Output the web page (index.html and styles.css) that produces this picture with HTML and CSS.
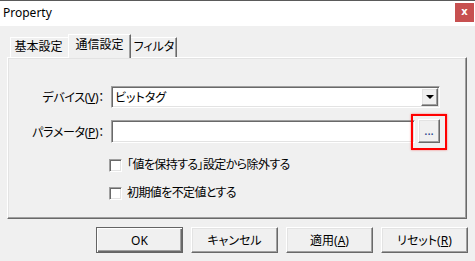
FILE: index.html
```html
<!DOCTYPE html>
<html lang="ja">
<head>
<meta charset="utf-8">
<title>Property</title>
<link rel="stylesheet" href="styles.css">
</head>
<body>
<div class="window">
  <div class="titlebar">
    <span class="title">Property</span>
    <span class="close">x</span>
  </div>
  <div class="content">
    <div class="tabs">
      <div class="tab tab-first">基本設定</div>
      <div class="tab tab-active">通信設定</div>
      <div class="tab tab-last">フィルタ</div>
    </div>
    <div class="panel">
      <div class="row row-device">
        <label class="label">デバイス(<u>V</u>)：</label>
        <div class="combo sunken">
          <span class="combo-text">ビットタグ</span>
          <span class="combo-btn raised"><span class="tri"></span></span>
        </div>
      </div>
      <div class="row row-param">
        <label class="label">パラメータ(<u>P</u>)：</label>
        <div class="input sunken"></div>
        <div class="dots-wrap">
          <button class="dots raised">...</button>
          <span class="highlight"></span>
        </div>
      </div>
      <div class="check check-first">
        <span class="box sunken"></span>
        <span class="check-text">「値を保持する」設定から除外する</span>
      </div>
      <div class="check check-second">
        <span class="box sunken"></span>
        <span class="check-text">初期値を不定値とする</span>
      </div>
    </div>
    <div class="buttons">
      <button class="btn raised btn-default">OK</button>
      <button class="btn raised">キャンセル</button>
      <button class="btn raised">適用(<u>A</u>)</button>
      <button class="btn raised">リセット(<u>R</u>)</button>
    </div>
  </div>
</div>
</body>
</html>
```

FILE: styles.css
```css
* { box-sizing: border-box; }
html, body { margin: 0; padding: 0; }
body {
  width: 475px;
  height: 261px;
  overflow: hidden;
  background: #f0f0f0;
  font-family: "Noto Sans", "Noto Sans CJK JP", sans-serif;
  font-size: 12px;
  color: #000;
  font-feature-settings: "palt";
}
.window { width: 475px; height: 261px; }

.titlebar {
  height: 26px;
  background: #fff;
  border-top: 1px solid #5a5a5a;
  display: flex;
  justify-content: space-between;
  align-items: flex-start;
}
.title {
  padding-left: 3px;
  margin-top: 4px;
  line-height: 16px;
  font-size: 12px;
}
.close {
  width: 19px;
  height: 19px;
  margin-top: 2px;
  margin-right: 1px;
  background: #c75050;
  color: #fff;
  font-family: "DejaVu Sans", sans-serif;
  font-weight: bold;
  font-size: 10px;
  line-height: 18px;
  text-align: center;
}

.content { padding: 0 8px 0 7px; }

.sunken {
  border: 1px solid;
  border-color: #a0a0a0 #fff #fff #a0a0a0;
  box-shadow: inset 1px 1px 0 #696969, inset -1px -1px 0 #e3e3e3;
  background: #fff;
}
.raised {
  border: 1px solid;
  border-color: #fff #696969 #696969 #fff;
  box-shadow: inset -1px -1px 0 #a0a0a0, inset 1px 1px 0 #e3e3e3;
  background: #f0f0f0;
}

.tabs {
  margin-top: 8px;
  height: 23px;
  padding-left: 3px;
  display: flex;
  align-items: flex-end;
}
.tab {
  height: 20px;
  line-height: 18px;
  text-align: center;
  background: #f0f0f0;
  border-top: 1px solid #fff;
  border-left: 1px solid #fff;
  border-right: 1px solid #696969;
  box-shadow: inset -1px 0 0 #a0a0a0;
}
.tab-first { width: 60px; padding-right: 3px; }
.tab-active {
  width: 63px;
  height: 24px;
  margin-left: -2px;
  margin-bottom: -1px;
  line-height: 20px;
  position: relative;
  z-index: 1;
  padding-bottom: 2px;
}
.tab-last { width: 48px; margin-left: -2px; padding-left: 2px; }

.panel {
  height: 162px;
  border: 1px solid;
  border-color: #fff #696969 #696969 #fff;
  box-shadow: inset -1px -1px 0 #a0a0a0, inset 1px 1px 0 #e3e3e3;
  padding-top: 28px;
}
.row { display: flex; align-items: center; }
.row-device { height: 22px; }
.row-param { height: 23px; margin-top: 12px; }
.label {
  width: 96px;
  text-align: right;
  margin-right: 7px;
  white-space: nowrap;
  letter-spacing: -0.3px;
}
.combo {
  width: 329px;
  height: 22px;
  display: flex;
  align-items: stretch;
  justify-content: space-between;
  padding: 1px 1px 1px 2px;
}
.combo-text { line-height: 19px; padding-left: 1px; }
.combo-btn {
  width: 17px;
  display: flex;
  align-items: center;
  justify-content: center;
}
.tri {
  width: 0; height: 0;
  border-left: 4px solid transparent;
  border-right: 4px solid transparent;
  border-top: 4px solid #000;
}
.input { width: 304px; height: 23px; }
.dots-wrap { position: relative; margin-left: 3px; }
.dots {
  display: block;
  width: 22px;
  height: 24px;
  margin-top: -1px;
  padding: 0;
  font-family: inherit;
  font-size: 12px;
  line-height: 16px;
  color: #1a3a8a;
}
.highlight {
  position: absolute;
  left: -7px;
  top: -6px;
  width: 36px;
  height: 36px;
  border: 2px solid #f00;
  box-shadow: 0 0 2px rgba(255, 0, 0, 0.5);
}

.check {
  display: flex;
  align-items: center;
  height: 16px;
  padding-left: 101px;
}
.check-first { margin-top: 14px; }
.check-second { margin-top: 12px; }
.box { width: 13px; height: 13px; margin-right: 5px; }
.check-text { line-height: 16px; white-space: nowrap; letter-spacing: -0.6px; }

.buttons {
  margin-top: 8px;
  margin-right: -1px;
  display: flex;
  justify-content: flex-end;
  gap: 8px;
}
.btn {
  width: 87px;
  height: 26px;
  padding: 0;
  font-family: inherit;
  font-size: 12px;
  color: #000;
  font-feature-settings: "palt";
}
.btn-default {
  border: 1px solid #646464;
  box-shadow: inset 1px 1px 0 #fff, inset -1px -1px 0 #696969, inset -2px -2px 0 #a0a0a0;
}
u { text-underline-offset: 1px; }
```
